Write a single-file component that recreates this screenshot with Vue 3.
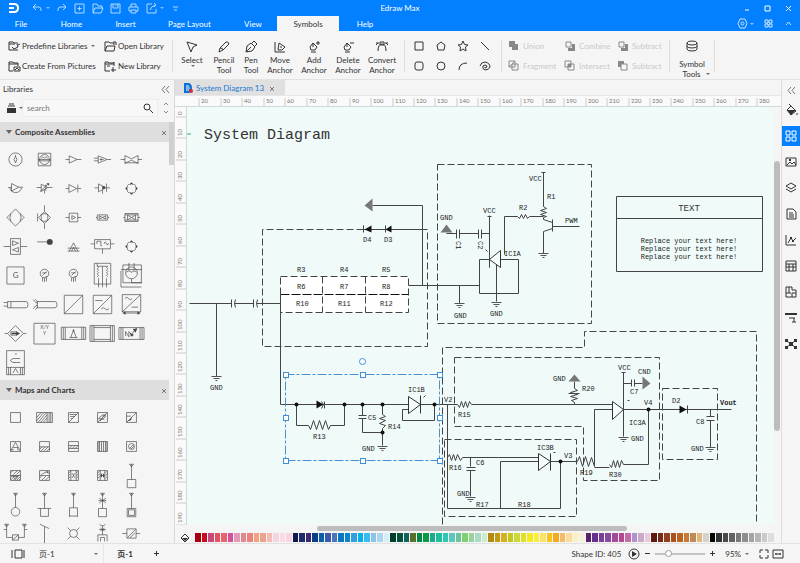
<script setup>
import { ref } from 'vue'

const menus = ['File', 'Home', 'Insert', 'Page Layout', 'View', 'Symbols', 'Help']
const activeMenu = ref('Symbols')
const search = ref('')
const zoom = ref(22)

const quick = [
  { name: 'Undo', d: 'M5 2L2 5L5 8M2 5H8Q10 5 10 8V9', caret: true },
  { name: 'Redo', d: 'M8 2L11 5L8 8M11 5H5Q3 5 3 8V9' },
  { name: 'New', d: 'M2 2H11V11H2ZM6.5 4.5V8.5M4.5 6.5H8.5' },
  { name: 'Open', d: 'M2 11V2H6L7 4H11V6M2 11L4 6H12L10 11Z' },
  { name: 'Save', d: 'M2 2H11V11H2ZM4 2V6H9V2M7 3V4' },
  { name: 'Print', d: 'M4 5V2H9V5M2 5H11V9H9M4 9H2V5M4 8H9V11H4Z' },
  { name: 'Export', d: 'M7 2H2V11H11V7M5 8Q6 4 11 3M9 1L11 3L9 5', caret: true },
]

const libraryActions = [
  { name: 'Predefine Libraries', d: 'M1 2H5L6 3H10M1 2V10H10M1 4H7M9 4L10 7L6 9L4 7M10 5L12 4', caret: true },
  { name: 'Open Library', d: 'M1 11V2H5L6 3H10V5M1 11L3 6H11L10 11ZM9 2H12V5' },
  { name: 'Create From Pictures', d: 'M5 11H1V2H5L6 3H10V6M1 4H10M6 7H12V11H6ZM7 10L9 8L11 10' },
  { name: 'New Library', d: 'M6 11H1V2H4L5 3H9L10 2V6M1 4H10M3 6H6M9 7V12M7 10H12' },
]

const tools = [
  { a: 'Select', b: '', d: 'M2 2L12 5L8 7L6 12Z' },
  { a: 'Pencil', b: 'Tool', d: 'M2 12L3 8L9 2Q11 1 12 4L6 10ZM3 8Q6 8 6 10' },
  { a: 'Pen', b: 'Tool', d: 'M2 12L3 6L7 3L11 7L8 11ZM8 3L10 1L13 4L11 6M2 12L7 7' },
  { a: 'Move', b: 'Anchor', d: 'M2 2V12H12M5 10L6 3L12 7L9 10ZM8 6V8' },
  { a: 'Add', b: 'Anchor', d: 'M4 12H9M4 10L3 7L6 3L10 7L8 10ZM6 3V7M11 1V5M9 3H13' },
  { a: 'Delete', b: 'Anchor', d: 'M4 12H9M4 10L3 7L6 3L10 7L8 10ZM6 3V7M9 3H13' },
  { a: 'Convert', b: 'Anchor', d: 'M1 3H4M10 3H13M3 11Q3 4 7 4Q11 4 11 11M5 2H9V5H5ZM1 5L3 3M11 3L13 5' },
]

const shapes = [
  { name: 'Rectangle', d: 'M2 2H10V10H2Z' },
  { name: 'Polygon', d: 'M6 2L10 5L9 10H3L2 5Z' },
  { name: 'Star', d: 'M6 1L7.5 4.5L11 5L8.5 7L9 11L6 9L3 11L3.5 7L1 5L4.5 4.5Z' },
  { name: 'Line', d: 'M2 2L10 10' },
  { name: 'Rounded rectangle', d: 'M4 2H8Q10 2 10 4V8Q10 10 8 10H4Q2 10 2 8V4Q2 2 4 2Z' },
  { name: 'Ellipse', d: 'M6 2A4 4 0 1 1 6 10A4 4 0 1 1 6 2Z' },
  { name: 'Arc', d: 'M2 10Q2 3 10 3' },
  { name: 'Spiral', d: 'M1 6Q2 2 6 2Q11 3 11 7Q10 10 6 10Q3 9 4 6Q6 4 8 6Q8 8 6 8L6 7' },
]

const booleans = [
  { name: 'Union', s: '', f: 'M1 1H7V4H10V10H4V7H1Z' },
  { name: 'Combine', s: 'M2 2H7V7H2Z', f: 'M8 4H11V11H4V8H8Z' },
  { name: 'Subtract', s: 'M2 2H7V7H2Z', f: 'M8 4H11V11H4V8H8Z' },
  { name: 'Fragment', s: 'M1 1H7V7H1ZM4 4H10V10H4ZM7 1L1 7', f: '' },
  { name: 'Intersect', s: 'M1 1H7V7H1ZM4 4H10V10H4Z', f: 'M4 4H7V7H4Z' },
  { name: 'Subtract', s: 'M4 4H10V10H4Z', f: 'M1 1H7V4H4V7H1Z' },
]

const hatch = 'M-15 6L-6 -3M-15 14L2 -3M-7 15L11 -3M3 15L15 3M10 15L15 10'
const ring = 'M-13-8A15 15 0 0 1-8-13M8-13A15 15 0 0 1 13-8M13 8A15 15 0 0 1 8 13M-8 13A15 15 0 0 1-13 8'
const ringTips = 'M-8-11L0-19L8-11L0-13ZM11-8L19 0L11 8L13 0ZM8 11L0 19L-8 11L0 13ZM-11 8L-19 0L-11-8L-13 0Z'
const meter = 'M-13-6A13 13 0 1 1 13-6A13 13 0 1 1-13-6M-7-8H7M-6 0L6-12M-6 7V18M0 7V20M6 7V18M3 3H9'
const box = 'M-15-15H15V15H-15Z'
const antenna = 'M-6-34H6M-6-34L0-26L6-34M0-34V'

const assemblies = [
  { d: 'M-20 0A20 20 0 1 1 20 0A20 20 0 1 1-20 0M0-10Q9 0 0 10Q-9 0 0-10M0-10V-14' },
  { d: 'M-19-19H19V19H-19ZM-15 0A15 15 0 1 1 15 0A15 15 0 1 1-15 0M-19 0H19M-19 4H19M-10-4Q-5-12 0-4Q5-12 10-4' },
  { d: 'M-24 0H-13M-13-11V11L11 0ZM11 0H24' },
  { d: 'M-26-4H-13M-26 4H-13M-13-11V11L14 0ZM14 0H26M-9 0H3M-4-4V4' },
  { d: 'M-33 0H-20M-20-12V12L0 2L20 12V-12L0-2ZM20 0H32M-20 10H20' },
  { d: 'M-22-3H-12M-12-15V8L10-4ZM10-4H23M-17-3A17 15 0 0 0 18-3' },
  { d: 'M-24-3H-10M-10-13V9L10-3ZM10-3H24M-14 10L12-15M0 3V15M4-12V7', f: 'M6-16H14V-8Z' },
  { d: 'M-24 0H-14M-14-12V12L10 0ZM13-12V12M13 0H23' },
  { d: 'M-24-2H-12M-12-14V10L10-2ZM12-15V10M12-2H23M0 4V16', f: 'M-1-7H7V1H-1Z' },
  { d: ring, f: ringTips },
  { d: 'M0-26L26 0L0 26L-26 0ZM-14-12Q-20 0-14 12M14-12Q20 0 14 12' },
  { d: 'M0-37V-18M0-18L18 0L0 18L-18 0ZM0 18V35M-21-12V12M-10-9V9M10-9V9M-10-9Q0-15 10-9M-10 9Q0 15 10 9' },
  { d: 'M-24 0H-13M-13-13H13V13H-13ZM13 0H23M-5-6V6L6 0Z' },
  { d: 'M-20 0H-15M-15-8H15Q18 0 15 8H-15Q-18 0-15-8ZM15 0H20M-10-5V5L0 0L10-5V5L0 0Z' },
  { d: 'M-25 0H-20M-20-12H20V12H-20ZM20 0H26M-12-7V7L0 0L12-7V7L0 0ZM-20-8H20M-20 8H20' },
  { d: 'M-36 0H-15M-15-24H15V24H-15ZM15 0H36M-9-17V-3L9-10ZM9 3V17L-9 10Z' },
  { d: 'M-22-14H10', f: 'M7-14A9 9 0 1 1 25-14A9 9 0 1 1 7-14' },
  { d: 'M-18 14H18M-13 14L0-11L13 14M-18 5H18M-6 14L0 2L6 14' },
  { d: 'M-36-8H-24M-24-21H24V7H-24ZM24-8H36M0 7V22M-17-8V-16H-5V-2H-2M5-8Q8-20 12-8Q15 0 18-10' },
  { d: ring, f: ringTips },
  { d: 'M-26-26H26V26H-26Z', t: 'G', ts: 24, ty: 9 },
  { d: meter },
  { d: meter },
  { d: 'M-25-37H25V26H-25ZM-16-37V-28Q-8-24-16-20Q-8-16-16-12Q-8-8-16-4Q-8 0-16 4M-16-28H16M16-28Q8-24 16-20Q8-16 16-12Q8-8 16-4Q8 0 16 4M-12 8V36M0-28V36M12 8V36' },
  { d: 'M-26-32H30V22H-26ZM-18-8A18 18 0 1 1 18-8A18 18 0 1 1-18-8M-32-18H32M-8-38V-16M8-38V-16M-32-14V35H30M0 10V22H32M-16-10Q-8-18 0-10Q8-18 16-10' },
  { d: 'M-36-6H-24M-36 5H-24M-24-9H32Q38-9 38 0Q38 10 32 10H-24ZM-14-9V10' },
  { d: 'M-34-15Q-28-4-20-4M-34 13Q-28 2-20 2M-22-9H32Q38-9 38 0Q38 10 32 10H-22ZM-28-16L-20-8M-28 15L-20 8' },
  { d: 'M-28-28H28V28H-28ZM-28 28L28-28' },
  { d: 'M-28-28H28V28H-28ZM-28 28L28-28M-22-12H0M-4 14Q2 5 8 13Q14 21 20 12' },
  { d: 'M-28-30H28V22H-28ZM-28 22L28-30M-20-18Q-14-27-9-18Q-4-10 2-18M0 8H20M-22 26H24', f: 'M-28 26L-18 21V31ZM28 26L18 21V31Z' },
  { d: 'M-33 0H-24M24 0H33M0-24L24 0L0 24L-24 0ZM-14-5H4M-14 5H4M-14-5V5', f: 'M-12-2H2V-7L14 0L2 7V2H-12Z' },
  { d: 'M-32-31H32V32H-32Z', t: 'X/Y', ts: 15, ty: -13, u: 'Y' },
  { d: 'M-37-19H37V18H-37ZM-31-19V18M-25-19V18M31-19V18M25-19V18M-12 12H12M-8 12L0-12L8 12M0-12V-5' },
  { d: 'M-38-24H36V24H-38ZM-32-24V24M-26-24V24M30-24V24M24-24V24M-26-18H24M-26 18H24' },
  { d: 'M-38-18H38V18H-38ZM-32-18V18M-26-18V18M32-18V18M26-18V18M-18 8V-6L-8 10V-6L4 8V-4L14-12', f: 'M4-14L18-16L12-2ZM-4-2L6 4L-2 10Z' },
  { d: 'M-27-36H27V37H-27ZM-27 15H27M-21 15V37M-15 15V37M21 15V37M15 15V37M-16-6L-8-12H14M-16-6L-8 0H14M-8 32L0 18L8 32M-2-26H4' },
]

const charts = [
  { d: box },
  { d: 'M-24-15H24V15H-24ZM-24 0L-10-15M-24 10L-2-15M-20 15L6-15M-12 15L8-8M-4 15L8 1M8-15V15M14-15V15M19-15V15' },
  { d: box + 'M-15 15L15-15M-12-9H10M-10-3H4M-8 3H-2' },
  { d: box + 'M-15 15L15-15M-12 4L-4-5H10L2 4ZM-8 11L-2 5H6M0-8H10' },
  { d: box + 'M-15 15L15-15M-15-4H-2', f: 'M-12 11L2-1L-2 8Z' },
  { d: box + 'M-15 15L0-13L15 15M-7 3H7V12M-15 10H-5' },
  { d: box + 'M-15 1H15M-15 9L-7 1M-12 15L2 1M-3 15L11 1M6 15L15 6' },
  { d: box + 'M-15-3H15M-15 6H15M-13 6L-4-3M-4 6L5-3M5 6L14-3' },
  { d: box + 'M-9-15V15M-3-15V15M3-15V15M9-15V15', f: 'M-14-15H-10V15H-14ZM10-15H14V15H10Z', o: 0.4 },
  { d: box + 'M-9 0A9 9 0 1 1 9 0A9 9 0 1 1-9 0M-6 6L6-6M-2 8L8-2' },
  { d: box + hatch + 'M-15 0H15M-15-8L-8-15M-6-4L6-15M4-4L15-15M-8 3H8L0 12Z' },
  { d: box + 'M-15 0H15M-15 8L-8 1M-9 15L5 1M2 15L15 2M-10-3L8-12', f: 'M4-12H12V-5Z' },
  { d: box + 'M-8-15V15M8-15V15M-4-7L4 7M4-7L-4 7M-14-8L-9-13M-14 0L-9-5M-14 8L-9 3M9-8L14-13M9 0L14-5M9 8L14 3' },
  { d: box + 'M-7-15V15M7-15V15M-14-8L-9-13M-14 0L-9-5M-14 8L-9 3M9-8L14-13M9 0L14-5M9 8L14 3M-7 0H7', f: 'M-5-8L5 8V-8L-5 8Z' },
  { d: antenna + '12M-13 12H13V37H-13Z' },
  { d: antenna + '9M-13 22A13 13 0 1 1 13 22A13 13 0 1 1-13 22' },
  { d: antenna + '12M-21 12H20M-12 12V36H12V12' },
  { d: antenna + '10M-12 10H12V35H-12ZM-12 35V38M12 35V38' },
  { d: antenna + '12M-12 12H12V37H-12ZM-12-12H12M-10-19L10-5M10-19L-10-5' },
  { d: antenna + '12M-13 12H13V37H-13ZM-9 16H9V33H-9Z' },
  { d: 'M-33-28H-21M-33-28L-27-20L-21-28M21-28H33M21-28L27-20L33-28M-27-28V12H-9M27-28V12H9M-9 4H9V20H-9ZM-9 20L9 4M-36-12H-27M27-12H36' },
  { d: 'M-14-28L14-15M0-20V32' },
  { d: 'M-12 0A12 12 0 1 1 12 0A12 12 0 1 1-12 0M-18-18L-9-9M18-18L9-9M-18 18L-9 9M18 18L9 9' },
  { d: 'M-9-28Q0-18 9-28M0-24V4M-14 24V4H14V24M-6 24V12H6V24M-10-12H10M-6-16L6-8M6-16L-6-8' },
  { d: 'M-28 0H-14M-14-14H14V14H-14ZM14 0H26M-12 12L12-12M-5 14L10-2' },
]

const sections = [
  { name: 'Composite Assemblies', items: assemblies },
  { name: 'Maps and Charts', items: charts },
]

const scale = 472 / 22
const hTicks = Array.from({ length: 27 }, (_, i) => ({ n: (i + 2) * 10, x: Math.round((i + 1) * scale) }))
const vTicks = Array.from({ length: 20 }, (_, i) => ({ n: i * 10, y: Math.round(10 + i * scale) }))

const palette = [
  '#a8000e', '#c80d20', '#c94a78', '#e0535f', '#e8636d', '#d9509a', '#e39ab9', '#e08a8e', '#ea8380', '#f3a17e', '#eba489', '#f3bcb4', '#f3d6e0', '#fbd9e6', '#f9d5e2',
  '#10184f', '#1f2a6b', '#3b2a72', '#0a3f87', '#0a5fa5', '#3a5bab', '#4a74b8', '#0a78c0', '#0a86d0', '#32a0dc', '#05aeee', '#35bdf2', '#8fc3e6', '#a9d6f0', '#d4eff8',
  '#003d2b', '#04523b', '#0a6560', '#5a6f2c', '#008a45', '#0a9a44', '#1fa890', '#1fbf9c', '#2fc6b6', '#5ac8bd', '#6ec49a', '#7fcf73', '#9ad39a', '#a9dcc5', '#cdeccd',
  '#b38a10', '#c29a18', '#d5b21c', '#c3c720', '#c9d93a', '#e2df28', '#f4ea1c', '#fbee3a', '#f9e36c', '#f5c518', '#f4a91f', '#f3bb6a', '#f9dc9c', '#fbeec0', '#f6f2d8',
  '#5a1f6e', '#65308c', '#7b3f98', '#8a4aa2', '#a34a9b', '#b5478e', '#c76bac', '#ae93cf', '#cba9c9', '#ecc8de',
  '#5b1a10', '#7a2b17', '#93401f', '#a9511f', '#bd6420', '#c97a34', '#bd8a5a', '#e0b878', '#d6d2ca',
  '#050505', '#333333', '#4a4a4a', '#626262', '#7a7a7a', '#8e8e8e', '#a3a3a3', '#b6b6b6', '#cacaca', '#dedede',
]

const panels = [
  { name: 'Fill', d: 'M3 7L7 3L12 8L7 12ZM7 3L5 1M13 10V12', f: 'M3 7H12L7 12Z' },
  { name: 'Library', d: 'M2 2H6V6H2ZM8 2H12V6H8ZM2 8H6V12H2ZM8 8H12V12H8Z', f: '', on: true },
  { name: 'Picture', d: 'M2 3H12V11H2ZM3 10L6 7L8 9L10 7L12 10', f: 'M5 4H7V6H5Z' },
  { name: 'Layers', d: 'M2 5L7 2L12 5L7 8ZM2 8L7 11L12 8', f: '' },
  { name: 'Page', d: 'M3 2H9L12 5V12H3ZM5 6H9M5 8H10M5 10H10', f: '' },
  { name: 'Chart', d: 'M2 2V12H12M4 10L7 5L9 8L12 5', f: 'M6 4H8V6H6ZM8 7H10V9H8Z' },
  { name: 'Table', d: 'M2 2H12V12H2ZM2 5H12M2 8H12M5 5V12M9 5V12', f: '' },
  { name: 'Floor plan', d: 'M2 2H8V5H12V12H2ZM5 2V8M2 8H7M8 8V12M8 8H12', f: '' },
  { name: 'Gantt', d: 'M2 3H12M5 7H11M10 7V11M8 11H12', f: 'M1 2H13V4H1Z' },
  { name: 'Relations', d: 'M3 4L11 10M11 4L3 10', f: 'M1 2H4V5H1ZM10 2H13V5H10ZM1 9H4V12H1ZM10 9H13V12H10ZM5 5H9V9H5Z' },
]

const dashed = [
  'M364 230H263V347H428V230',
  'M438 165H592V324H438Z',
  'M443 525V348H585V332H757V525',
  'M445 440H577V517H445Z',
  'M455 358H660V481H584V427H455Z',
  'M663 389H718V460H663Z',
]

const wires = [
  'M190 304H232M235 304H254M257 304H281M217 304V377',
  'M281 295V405H409M421 405H458',
  'M297 405V426H309L311 430L314 421L317 430L320 421L323 430L326 421L329 430L331 426H345V405',
  'M363 405V416M359 416H367M359 419H367M363 419V433H383',
  'M383 405V415L386 417L380 419L386 421L380 424L386 426L383 429V446',
  'M409 410H403V421H435V405',
  'M458 405L460 408L462 402L464 408L466 402L468 408L470 402L472 405H613',
  'M448 405V509H561V462M501 509V462H539M551 462H578',
  'M448 458L450 455L452 461L454 455L456 461L458 455L461 461L463 458H539',
  'M471 458V467M467 468H476M467 471H476M471 471V497',
  'M578 462L580 457L583 467L586 457L589 467L592 458L595 467V410H613M595 468H610',
  'M610 465L612 468L614 461L616 468L618 461L620 468L622 461L624 465H649V410',
  'M575 382V389L578 391L571 393L578 395L571 397L578 399L572 401L575 403V405M569 394H580',
  'M624 373V437M622 373H626M624 410H732',
  'M624 384H632M632 380V387M635 380V387M635 384H643',
  'M711 410V417M707 417H715M707 421H715M711 421V448',
  'M409 286H480M460 286V304M423 286V206H373',
  'M364 230H428M364 226V233M386 226V233',
  'M480 260V294H519V260H501M480 260H490',
  'M497 265V302M490 216V268M488 217H492',
  'M447 234H457M457 230V239M460 230V239M460 234H479M479 230V239M482 230V239M482 234H490',
  'M505 255V217H518L520 219L522 215L524 219L526 215L528 219L530 217H544',
  'M544 173V207L547 209L541 211L547 213L541 215L547 217L544 218V220L553 223M553 220V232M553 229L544 232V254M553 227H580M542 173H546',
]

const amps = [
  'M409 397V414L421 405ZM421 396V414',
  'M539 454V471L551 462ZM551 454V471',
  'M613 402V420L624 410Z',
  'M490 260L501 251V268Z',
]

const solid = 'M317 401V409L324 405ZM680 406V414L687 410ZM372 226V233L365 230ZM392 226V233L386 230Z'
const nodes = [[297, 405], [345, 405], [363, 405], [383, 405], [383, 433], [435, 405], [561, 462], [649, 410]]
const grounds = [[217, 377], [383, 447], [471, 498], [624, 438], [711, 448], [460, 304], [497, 303], [544, 254]]
const handles = [[286, 375], [363, 375], [440, 375], [286, 418], [440, 418], [286, 461], [363, 461], [440, 461]]

const labels = [
  ['D4', 363, 242], ['D3', 384, 242], ['R3', 297, 272], ['R4', 340, 272], ['R5', 382, 272],
  ['R6', 297, 289], ['R7', 340, 289], ['R8', 382, 289], ['R10', 296, 306], ['R11', 338, 306], ['R12', 380, 306],
  ['GND', 210, 390], ['GND', 440, 220], ['VCC', 483, 213], ['VCC', 529, 181], ['R1', 547, 199], ['R2', 519, 210],
  ['PWM', 565, 223], ['ICIA', 504, 256], ['GND', 454, 318], ['GND', 490, 316], ['R13', 313, 439], ['C5', 368, 420],
  ['R14', 388, 429], ['GND', 362, 451], ['IC1B', 408, 392], ['V2', 444, 402], ['R15', 458, 417], ['R16', 449, 470],
  ['C6', 476, 465], ['GND', 457, 496], ['R17', 476, 507], ['R18', 518, 507], ['IC3B', 537, 450], ['V3', 564, 458],
  ['R19', 580, 475], ['R30', 609, 477], ['R20', 582, 391], ['GND', 553, 381], ['VCC', 618, 370], ['CND', 638, 374],
  ['C7', 630, 394], ['V4', 644, 405], ['IC3A', 629, 425], ['GND', 631, 441], ['D2', 672, 403], ['C8', 696, 424], ['GND', 691, 451],
]
</script>

<template>
  <div class="app">
    <header class="top">
      <div class="title-row">
        <div class="quick">
          <svg class="logo" viewBox="0 0 12 12" aria-hidden="true"><path d="M1 2H6Q10 2 10 6Q10 10 6 10H1M1 6H6" /></svg>
          <button v-for="q in quick" :key="q.name" class="quick-btn" :class="{ wide: q.caret }" :aria-label="q.name">
            <svg class="i13" viewBox="0 0 13 13"><path :d="q.d" /></svg>
            <i v-if="q.caret" class="caret"></i>
          </button>
          <button class="quick-btn" aria-label="Customize">
            <svg class="i13" viewBox="0 0 13 13"><path d="M4 5H9M5 8H8" /></svg>
          </button>
        </div>
        <div class="title">Edraw Max</div>
        <div class="window">
          <button aria-label="Minimize"><svg class="i11" viewBox="0 0 11 11"><path d="M4 7H8" /></svg></button>
          <button aria-label="Maximize"><svg class="i11" viewBox="0 0 11 11"><path d="M3 3H8V8H3Z" /></svg></button>
          <button aria-label="Close"><svg class="i11" viewBox="0 0 11 11"><path d="M3 3L8 8M8 3L3 8" /></svg></button>
        </div>
      </div>
      <div class="menu-row">
        <nav class="menus">
          <button v-for="m in menus" :key="m" :class="{ active: m === activeMenu }" @click="activeMenu = m">{{ m }}</button>
        </nav>
        <div class="menu-right">
          <button aria-label="Settings">
            <svg class="i11" viewBox="0 0 11 11"><path d="M3 1H8L10 5.5L8 10H3L1 5.5ZM4 5.5A1.5 1.5 0 1 1 7 5.5A1.5 1.5 0 1 1 4 5.5" /></svg><i class="caret"></i>
          </button>
          <button aria-label="Apps">
            <svg class="i11" viewBox="0 0 11 11"><path d="M2 2H5V5H2ZM6 2H9V5H6ZM2 6H5V9H2ZM6 6H9V9H6Z" /></svg>
          </button>
          <button aria-label="Collapse ribbon">
            <svg class="i11" viewBox="0 0 11 11"><path d="M3 7L5.5 4L8 7" /></svg>
          </button>
        </div>
      </div>
    </header>

    <div class="ribbon">
      <div class="lib-actions">
        <button v-for="l in libraryActions" :key="l.name">
          <svg class="i13" viewBox="0 0 13 13"><path :d="l.d" /></svg>{{ l.name }}<i v-if="l.caret" class="caret"></i>
        </button>
      </div>
      <span class="sep"></span>
      <div class="tools">
        <button v-for="t in tools" :key="t.a">
          <svg class="i14" viewBox="0 0 14 14"><path :d="t.d" /></svg>
          <span>{{ t.a }}</span>
          <span v-if="t.b">{{ t.b }}</span>
          <i v-else class="caret"></i>
        </button>
      </div>
      <span class="sep"></span>
      <div class="shapes">
        <button v-for="s in shapes" :key="s.name" :aria-label="s.name"><svg class="i12" viewBox="0 0 12 12"><path :d="s.d" /></svg></button>
      </div>
      <span class="sep"></span>
      <div class="booleans">
        <button v-for="(b, i) in booleans" :key="i" disabled>
          <svg class="i12" viewBox="0 0 12 12"><path v-if="b.s" :d="b.s" /><path v-if="b.f" class="fill" :d="b.f" /></svg>{{ b.name }}
        </button>
      </div>
      <span class="sep"></span>
      <button class="symbol-tools">
        <svg class="i14" viewBox="0 0 14 14"><path d="M2 4Q2 2 7 2Q12 2 12 4Q12 6 7 6Q2 6 2 4V10Q2 12 7 12Q12 12 12 10V4M2 7Q2 9 7 9Q12 9 12 7" /></svg>
        <span>Symbol</span>
        <span class="with-caret">Tools<i class="caret"></i></span>
      </button>
      <span class="sep"></span>
    </div>

    <main class="body">
      <aside class="left">
        <div class="left-head">
          <span>Libraries</span>
          <button aria-label="Collapse libraries"><svg class="i11" viewBox="0 0 11 11"><path d="M5 2L2 5.5L5 9M9 2L6 5.5L9 9" /></svg></button>
        </div>
        <div class="search-row">
          <button class="lib-menu" aria-label="Library menu">
            <svg class="i11" viewBox="0 0 11 11"><path d="M3 1H8M2 3H9" /><path class="fill" d="M1 5H10V10H1Z" /></svg><i class="caret"></i>
          </button>
          <div class="search-box">
            <input v-model="search" type="text" placeholder="search" aria-label="Search libraries" />
            <button aria-label="Search"><svg class="i12" viewBox="0 0 12 12"><path d="M2 5A3 3 0 1 1 8 5A3 3 0 1 1 2 5M7.5 7.5L11 11" /></svg></button>
          </div>
          <div class="steps">
            <button aria-label="Previous"><svg viewBox="0 0 8 8"><path d="M2 5L4 3L6 5" /></svg></button>
            <button aria-label="Next"><svg viewBox="0 0 8 8"><path d="M2 3L4 5L6 3" /></svg></button>
          </div>
        </div>
        <div class="library">
          <div class="sections">
            <section v-for="s in sections" :key="s.name">
              <h2><i class="tri"></i><span>{{ s.name }}</span><button :aria-label="'Close ' + s.name"><svg class="i11" viewBox="0 0 11 11"><path d="M4 4L8 8M8 4L4 8" /></svg></button></h2>
              <div class="symbols">
                <svg v-for="(it, i) in s.items" :key="i" viewBox="-44 -44 88 88">
                  <path :d="it.d" />
                  <path v-if="it.f" class="fill" :d="it.f" :opacity="it.o || 1" />
                  <text v-if="it.t" x="0" :y="it.ty" :font-size="it.ts">{{ it.t }}</text>
                  <text v-if="it.u" x="0" :y="it.ty + 17" :font-size="it.ts">{{ it.u }}</text>
                </svg>
              </div>
            </section>
          </div>
          <div class="left-scroll"><i></i></div>
        </div>
      </aside>

      <div class="center">
        <div class="doc-tabs">
          <div class="doc-tab">
            <svg class="i12" viewBox="0 0 12 12"><path class="doc-b" d="M2 1H7Q10 2 10 6Q10 10 7 11H2Z" /><path class="doc-w" d="M4 4H7M4 6H8M4 8H7" /><circle class="doc-r" cx="9" cy="9" r="2" /></svg>
            <span>System Diagram 13</span>
            <button aria-label="Close document"><svg class="i11" viewBox="0 0 11 11"><path d="M4 4L8 8M8 4L4 8" /></svg></button>
          </div>
        </div>
        <svg class="h-ruler">
          <g v-for="t in hTicks" :key="t.n">
            <path :d="`M${t.x + 3} 2V11`" />
            <text :x="t.x + 5" y="7">{{ t.n }}</text>
          </g>
        </svg>
        <div class="stage">
          <svg class="v-ruler">
            <g v-for="t in vTicks" :key="t.n">
              <path :d="`M1 ${t.y}H11`" />
              <text :transform="`translate(7 ${t.y - 2}) rotate(-90)`">{{ t.n }}</text>
            </g>
          </svg>
          <svg class="canvas" role="img" aria-label="System Diagram">
            <g transform="translate(-187 -107)">
              <rect class="cells" x="280" y="277" width="128" height="36" />
              <g transform="translate(-0.5 -0.5)">
                <path v-for="(d, i) in dashed" :key="'d' + i" class="dash" :d="d" />
                <path class="dash" d="M281 277H409V313H281Z" />
                <path class="dash" d="M323 277V313M366 277V313" />
                <path class="dash heavy" d="M281 295H409" />
                <path v-for="(d, i) in wires" :key="'w' + i" class="wire" :d="d" />
                <path class="wire" d="M236 300Q234 304 236 308M232 300V308M258 300Q256 304 258 308M254 300V308M325 402V409M322 402L324 405L322 409M688 406V414" />
                <path v-for="(d, i) in amps" :key="'a' + i" class="amp" :d="d" />
                <path class="wire" d="M624 403V420M490 250V268M424 398L426 396M554 453H556M628 401H630M486 250L488 252" />
                <path class="ink" :d="solid" />
                <path class="gray" d="M373 199V212L365 206ZM643 377V390L651 384ZM569 382H581L575 375ZM441 233H453L447 225Z" />
                <circle v-for="(n, i) in nodes" :key="'n' + i" class="ink" :cx="n[0]" :cy="n[1]" r="2" />
                <g v-for="(g, i) in grounds" :key="'g' + i" class="ground" :transform="`translate(${g[0]} ${g[1]})`">
                  <path d="M-5 0H5M-3 2H3M-1 4H1" />
                </g>
                <path class="wire" d="M617 197H763V272H617ZM617 219H763" />
                <rect class="select-box" x="286" y="375" width="154" height="86" />
                <rect v-for="(h, i) in handles" :key="'h' + i" class="handle" :x="h[0] - 2" :y="h[1] - 2" width="5" height="5" />
                <circle class="handle" cx="363" cy="362" r="3" />
              </g>
              <text class="heading" x="204" y="139">System Diagram</text>
              <text v-for="(l, i) in labels" :key="'t' + i" class="label" :x="l[1]" :y="l[2]">{{ l[0] }}</text>
              <text class="label" transform="translate(456 241) rotate(90)">C1</text>
              <text class="label" transform="translate(478 241) rotate(90)">C2</text>
              <text class="label bold" x="720" y="405">Vout</text>
              <text class="box-title" x="689" y="211">TEXT</text>
              <text v-for="y in [243, 251, 259]" :key="y" class="label mid" x="689" :y="y">Replace your text here!</text>
              <rect class="marker" x="187" y="133" width="4" height="2" />
            </g>
          </svg>
          <div class="v-scroll"><i></i></div>
        </div>
        <div class="h-scroll"><i></i></div>
        <div class="palette">
          <svg class="i12" viewBox="0 0 12 12"><path d="M2 6L6 2L10 6L6 10Z" /><path class="fill" d="M3 6H9L6 9Z" /></svg>
          <div class="swatches"><i v-for="(c, i) in palette" :key="i" :style="{ background: c }"></i></div>
        </div>
      </div>

      <aside class="right">
        <button class="collapse" aria-label="Collapse panel"><svg class="i11" viewBox="0 0 11 11"><path d="M5 2L2 5.5L5 9M9 2L6 5.5L9 9" /></svg></button>
        <button v-for="p in panels" :key="p.name" :class="{ on: p.on }" :aria-label="p.name">
          <svg class="i14" viewBox="0 0 14 14"><path :d="p.d" /><path v-if="p.f" class="fill" :d="p.f" /></svg>
        </button>
      </aside>
    </main>

    <footer class="status">
      <button class="view" aria-label="Page view"><svg class="i14" viewBox="0 0 14 14"><path d="M4 3H11V11H4ZM1 3V11M13 3V11" /></svg></button>
      <label class="page-pick">
        <select aria-label="Page"><option>页-1</option></select>
        <i class="caret"></i>
      </label>
      <button class="page-tab">页-1</button>
      <button class="add" aria-label="Add page"><svg class="i11" viewBox="0 0 11 11"><path d="M5.5 3V8M3 5.5H8" /></svg></button>
      <span class="grow"></span>
      <span class="shape-id">Shape ID: 405</span>
      <button aria-label="Play"><svg class="i12" viewBox="0 0 12 12"><path d="M1 6A5 5 0 1 1 11 6A5 5 0 1 1 1 6" /><path class="fill" d="M4 3V9L9 6Z" /></svg></button>
      <button class="minus" aria-label="Zoom out"><svg class="i11" viewBox="0 0 11 11"><path d="M3 5.5H8" /></svg></button>
      <input v-model="zoom" type="range" min="0" max="100" aria-label="Zoom" />
      <button aria-label="Zoom in"><svg class="i11" viewBox="0 0 11 11"><path d="M3 5.5H8M5.5 3V8" /></svg></button>
      <button class="percent">95%<i class="caret"></i></button>
      <button class="full" aria-label="Full screen"><svg class="i12" viewBox="0 0 12 12"><path d="M2 5V2H5M7 2H10V5M10 7V10H7M5 10H2V7" /></svg></button>
      <button aria-label="Fit page"><svg class="i12" viewBox="0 0 12 12"><path d="M1 2H11V10H1ZM3 6H9M4 5V7M8 5V7" /></svg></button>
    </footer>
  </div>
</template>

<style>
body {
  margin: 0;
}
</style>

<style scoped>
.app {
  display: flex;
  flex-direction: column;
  height: 100vh;
  overflow: hidden;
  background: #f5f5f5;
  color: #333;
  font: 8px/10px Lato, "Noto Sans CJK SC", sans-serif;
}
.app * {
  box-sizing: border-box;
}
button {
  display: flex;
  align-items: center;
  justify-content: center;
  padding: 0;
  border: 0;
  background: none;
  color: inherit;
  font: inherit;
  white-space: nowrap;
}
svg {
  display: block;
  flex: none;
}
svg path {
  fill: none;
  stroke: currentColor;
}
svg path.fill {
  fill: currentColor;
  stroke: none;
}
.i11 { width: 11px; height: 11px; }
.i12 { width: 12px; height: 12px; }
.i13 { width: 13px; height: 13px; }
.i14 { width: 14px; height: 14px; }
.caret {
  border: 2px solid transparent;
  border-top-color: currentColor;
  border-bottom: 0;
  margin-left: 2px;
  opacity: 0.7;
}

.top {
  flex: none;
  background: #0280ff;
  color: #fff;
}
.title-row {
  display: grid;
  grid-template-columns: 1fr auto 1fr;
  align-items: center;
  height: 16px;
}
.quick {
  display: flex;
  align-items: center;
  padding-left: 8px;
}
.quick-btn {
  width: 18px;
  opacity: 0.7;
}
.quick-btn.wide {
  width: 24px;
}
.logo {
  width: 12px;
  height: 12px;
  margin-right: 8px;
}
.logo path {
  stroke-width: 2;
}
.window {
  display: flex;
  justify-content: flex-end;
  gap: 10px;
  padding-right: 6px;
}
.menu-row {
  display: flex;
  justify-content: space-between;
  height: 15px;
}
.menus {
  display: grid;
  grid-template-columns: 42px 59px 49px 79px 48px 62px 52px;
}
.menus .active {
  background: #f5f5f5;
  color: #333;
}
.menu-right {
  display: flex;
  gap: 9px;
  padding-right: 6px;
}
.menu-right button {
  opacity: 0.8;
}

.ribbon {
  display: flex;
  flex: none;
  align-items: flex-start;
  height: 49px;
  padding: 5px 0 0 8px;
  border-bottom: 1px solid #e2e2e2;
}
.sep {
  flex: none;
  width: 1px;
  height: 32px;
  margin-top: 4px;
  background: #dcdcdc;
}
.lib-actions {
  display: grid;
  grid-template-columns: 96px 68px;
  grid-auto-rows: 20px;
}
.lib-actions button {
  justify-content: flex-start;
  gap: 1px;
}
.tools {
  display: grid;
  grid-template-columns: 34px 30px 24px 34px 34px 34px 34px;
  width: 231px;
  padding-left: 2px;
}
.tools button {
  flex-direction: column;
  justify-content: flex-start;
  padding-top: 4px;
}
.tools svg {
  margin-bottom: 1px;
}
.shapes {
  display: grid;
  grid-template-columns: repeat(4, 22px);
  grid-auto-rows: 20px;
  padding: 0 5px 0 3px;
}
.booleans {
  display: grid;
  grid-template-columns: 56px 53px 46px;
  grid-auto-rows: 20px;
  padding: 0 6px;
}
.booleans button {
  justify-content: flex-start;
  gap: 3px;
  color: #c9c9c9;
}
.booleans svg {
  color: #888;
}
.symbol-tools {
  flex-direction: column;
  width: 44px;
  padding: 3px 0 0;
}
.symbol-tools svg {
  margin-bottom: 6px;
}
.with-caret {
  display: flex;
  align-items: center;
  padding-left: 8px;
}
.with-caret .caret {
  margin-left: 5px;
}

.body {
  display: flex;
  flex: 1;
  min-height: 0;
}
.left {
  display: flex;
  flex: none;
  flex-direction: column;
  width: 175px;
  border-right: 1px solid #dadada;
}
.left-head {
  display: flex;
  flex: none;
  align-items: center;
  justify-content: space-between;
  height: 18px;
  padding: 0 3px;
}
.left-head button,
h2 button {
  color: #777;
}
.search-row {
  display: flex;
  flex: none;
  align-items: center;
  height: 24px;
  padding: 0 4px 4px 6px;
}
.lib-menu {
  width: 16px;
}
.search-box {
  display: flex;
  flex: 1;
  align-items: center;
  height: 18px;
  margin-right: 4px;
  padding-right: 3px;
  border: 1px solid #ececec;
  background: #f8f8f8;
}
.search-box input {
  flex: 1;
  min-width: 0;
  padding: 0 4px;
  border: 0;
  background: none;
  color: inherit;
  font: inherit;
}
.steps {
  display: grid;
  color: #888;
}
.steps svg {
  width: 8px;
  height: 8px;
}
.library {
  display: flex;
  flex: 1;
  min-height: 0;
}
.sections {
  flex: 1;
  overflow: hidden;
}
section + section {
  margin-top: 1px;
}
h2 {
  display: flex;
  align-items: center;
  height: 20px;
  margin: 0;
  padding: 0 0 0 6px;
  background: #dedede;
  font-size: 8px;
  font-weight: 700;
}
h2 span {
  flex: 1;
}
.tri {
  margin-right: 3px;
  border: 3px solid transparent;
  border-top: 4px solid #666;
  border-bottom: 0;
}
.symbols {
  display: grid;
  grid-template-columns: repeat(5, 29px);
  grid-auto-rows: 29px;
  padding: 3px 0 2px 1px;
  color: #444;
}
.symbols svg {
  width: 29px;
  height: 29px;
}
.symbols path {
  stroke-width: 2;
}
.symbols text {
  fill: #555;
  text-anchor: middle;
}
.left-scroll {
  width: 5px;
}
.left-scroll i {
  display: block;
  height: 43px;
  background: #d0d0d0;
}

.center {
  display: flex;
  flex: 1;
  flex-direction: column;
  min-width: 0;
}
.doc-tabs {
  display: flex;
  flex: none;
  height: 16px;
  border-bottom: 1px solid #e6e6e6;
}
.doc-tab {
  display: flex;
  align-items: center;
  gap: 2px;
  padding: 1px 8px 0 7px;
  background: #e0e0e0;
  color: #1b78d0;
}
.doc-tab button {
  color: #777;
}
svg path.doc-b { fill: #0a6fd8; stroke: none; }
svg path.doc-w { stroke: #fff; }
.doc-r { fill: #d92c3a; }
.h-ruler {
  width: 100%;
  height: 11px;
  border-bottom: 1px solid #cfdad9;
  background: #fafafa;
}
.h-ruler path,
.v-ruler path {
  stroke: #ccc;
}
.h-ruler text,
.v-ruler text {
  fill: #777;
  font-size: 6px;
}
.stage {
  display: flex;
  flex: 1;
  min-height: 0;
}
.v-ruler {
  width: 12px;
  height: 100%;
  border-right: 1px solid #cfdad9;
  background: #fafafa;
}
.canvas {
  flex: 1;
  min-width: 0;
  height: 100%;
  background: #effaf9;
}
.v-scroll {
  width: 7px;
  padding: 54px 1px 0 0;
}
.v-scroll i {
  display: block;
  width: 6px;
  height: 270px;
  border-radius: 3px;
  background: #bdbdbd;
}
.h-scroll {
  flex: none;
  height: 7px;
  padding: 1px 154px 0 142px;
}
.h-scroll i {
  display: block;
  height: 5px;
  border-radius: 3px;
  background: #bdbdbd;
}
.palette {
  display: flex;
  flex: none;
  align-items: center;
  height: 11px;
  padding: 0 7px 0 4px;
}
.swatches {
  display: flex;
  flex: 1;
  gap: 1px;
  height: 9px;
  margin-left: 4px;
}
.swatches i {
  flex: 1;
}
.cells { fill: #fff; }
svg path.dash { stroke: #444; stroke-dasharray: 7 3; }
svg path.heavy { stroke: #111; stroke-dasharray: 9 2; }
svg path.wire { stroke: #444; }
svg path.amp { fill: #f8fdfd; stroke: #333; }
svg path.ink, .ink { fill: #111; stroke: none; }
svg path.gray { fill: #777; stroke: none; }
.ground path { stroke: #555; }
.select-box { fill: none; stroke: #4a90cf; stroke-dasharray: 9 2 3 2; }
.handle { fill: #fff; stroke: #3f8fd6; }
.marker { fill: #8fd3b4; }
.heading,
.label,
.box-title {
  fill: #333;
  font-family: "Liberation Mono", monospace;
}
.heading { font-size: 15px; }
.label { font-size: 7px; fill: #222; }
.box-title { font-size: 9px; text-anchor: middle; }
.mid { text-anchor: middle; }
.bold { font-weight: 700; }

.right {
  display: flex;
  flex: none;
  flex-direction: column;
  gap: 6px;
  width: 19px;
  border-left: 1px solid #dcdcdc;
}
.right button {
  height: 20px;
}
.right .collapse {
  height: 14px;
  margin-top: 3px;
  margin-bottom: -3px;
  color: #777;
}
.right .on {
  background: #0280ff;
  color: #fff;
}

.status {
  display: flex;
  flex: none;
  align-items: center;
  height: 20px;
  padding-right: 16px;
  border-top: 1px solid #e2e2e2;
}
.view {
  margin-left: 11px;
}
.page-pick {
  display: flex;
  align-items: center;
  width: 79px;
  height: 20px;
  padding: 0 5px 0 14px;
  border-right: 1px solid #e6e6e6;
}
.page-pick select {
  flex: 1;
  padding: 0;
  border: 0;
  background: none;
  color: inherit;
  font: inherit;
  appearance: none;
}
.page-tab {
  width: 42px;
  font-weight: 700;
}
.add {
  margin-left: 5px;
}
.grow {
  flex: 1;
}
.shape-id {
  margin-right: 7px;
}
.minus {
  margin-left: 2px;
}
.status input {
  width: 50px;
  height: 10px;
  margin: 0 2px;
  background: none;
  appearance: none;
}
.status input::-webkit-slider-runnable-track {
  height: 2px;
  background: #c4c4c4;
}
.status input::-webkit-slider-thumb {
  width: 7px;
  height: 7px;
  margin-top: -3px;
  border: 1px solid #999;
  border-radius: 50%;
  background: #fff;
  appearance: none;
}
.percent {
  gap: 2px;
  margin: 0 9px 0 7px;
}
.full {
  margin-right: 2px;
}
</style>
